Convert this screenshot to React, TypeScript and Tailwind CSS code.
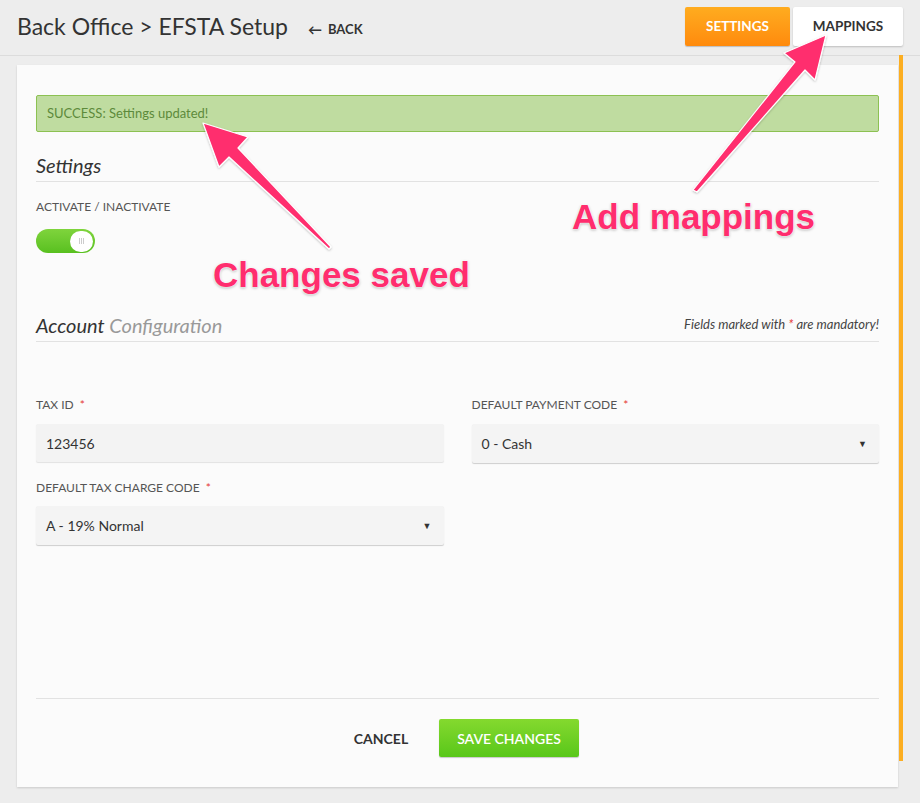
import React from "react";

function Field({ label, children }: { label: string; children: React.ReactNode }) {
  return (
    <div>
      <div className="text-[12px] leading-[16px] text-[#555] uppercase">
        {label} <span className="ml-[3px] text-[#e53935]">*</span>
      </div>
      {children}
    </div>
  );
}

function SelectBox({ value, className = "" }: { value: string; className?: string }) {
  return (
    <div
      className={`mt-[10px] flex h-[39px] items-center justify-between rounded-[2px] bg-[#f4f4f4] pl-[10px] pr-[12px] text-[14px] text-[#333] shadow-[0_1px_1px_rgba(0,0,0,0.18)] ${className}`}
    >
      <span>{value}</span>
      <span className="text-[9px] text-[#333]">▼</span>
    </div>
  );
}

export default function App() {
  return (
    <div className="relative h-[803px] w-[920px] overflow-hidden bg-[#ededed] font-['Lato',sans-serif] text-[#333]">
      <header className="flex h-[56px] items-start border-b border-[#dcdcdc] pl-[17px] pr-[17px]">
        <h1 className="mt-[10px] text-[23px] leading-[32px] text-[#333]">Back Office &gt; EFSTA Setup</h1>
        <button className="ml-[20px] mt-[19px] flex items-center gap-[6px] text-[13px] font-bold text-[#333]">
          <span className="text-[14px]">←</span> BACK
        </button>
        <div className="ml-auto mt-[7px] flex gap-[3px]">
          <button className="h-[39px] w-[105px] rounded-[2px] bg-gradient-to-b from-[#ffac1f] to-[#ff8a0c] text-[13.5px] font-bold text-white shadow-[0_1px_1px_rgba(0,0,0,0.2)]">
            SETTINGS
          </button>
          <button className="h-[39px] w-[110px] rounded-[2px] bg-white text-[13.5px] font-bold text-[#333] shadow-[0_1px_2px_rgba(0,0,0,0.2)]">
            MAPPINGS
          </button>
        </div>
      </header>

      <div className="flex">
        <main className="ml-[17px] mt-[9px] flex h-[722px] w-[881px] flex-col bg-[#fbfbfb] px-[19px] shadow-[0_1px_2px_rgba(0,0,0,0.15)]">
          <div className="mt-[30px] flex h-[37px] items-center rounded-[2px] border border-[#8cc152] bg-[#bfdca0] pl-[10px] text-[13px] text-[#5d8a3b]">
            SUCCESS: Settings updated!
          </div>

          <h2 className="mt-[21px] border-b border-[#e2e2e2] pb-[4px] text-[20px] italic leading-[24px] text-[#333]">
            Settings
          </h2>
          <div className="mt-[17px] text-[12px] leading-[16px] text-[#555]">ACTIVATE / INACTIVATE</div>
          <div className="mt-[14px] flex h-[24px] w-[59px] items-center justify-end rounded-full bg-gradient-to-b from-[#7fd43c] to-[#58c01f] pr-[2px]">
            <div className="flex h-[21px] w-[23px] items-center justify-center gap-[1px] rounded-full bg-white">
              <span className="h-[6px] w-px bg-[#ccc]" />
              <span className="h-[6px] w-px bg-[#ccc]" />
              <span className="h-[6px] w-px bg-[#ccc]" />
            </div>
          </div>

          <div className="mt-[60px] flex items-end justify-between border-b border-[#e2e2e2] pb-[4px]">
            <h2 className="text-[20px] italic leading-[24px]">
              <span className="text-[#333]">Account</span> <span className="text-[#999]">Configuration</span>
            </h2>
            <span className="mb-[3px] text-[13px] italic text-[#444]">
              Fields marked with <span className="text-[#e53935]">*</span> are mandatory!
            </span>
          </div>

          <div className="mt-[55px] grid grid-cols-2 gap-x-[28px] gap-y-[17px]">
            <Field label="Tax ID">
              <div className="mt-[11px] flex h-[38px] items-center rounded-[2px] bg-[#f3f3f3] pl-[10px] text-[14px] text-[#333] shadow-[0_1px_1px_rgba(0,0,0,0.1)]">
                123456
              </div>
            </Field>
            <Field label="Default Payment Code">
              <SelectBox value="0 - Cash" className="mt-[11px]" />
            </Field>
            <Field label="Default Tax Charge Code">
              <SelectBox value="A - 19% Normal" />
            </Field>
          </div>

          <div className="flex-1" />
          <footer className="flex justify-center gap-[13px] border-t border-[#e2e2e2] pb-[30px] pt-[20px]">
            <button className="h-[38px] w-[90px] text-[14px] font-bold text-[#333]">CANCEL</button>
            <button className="h-[38px] w-[140px] rounded-[2px] bg-gradient-to-b from-[#84d92e] to-[#58c719] text-[14px] font-semibold text-white shadow-[0_1px_1px_rgba(0,0,0,0.2)]">
              SAVE CHANGES
            </button>
          </footer>
        </main>
        <div className="ml-[1px] mt-[-1px] h-[706px] w-[4px] bg-[#fcae21]" />
      </div>

      <svg className="pointer-events-none absolute inset-0" width="920" height="803" viewBox="0 0 920 803">
        <defs>
          <filter id="sh" x="-20%" y="-20%" width="140%" height="140%">
            <feDropShadow dx="0" dy="1" stdDeviation="1" floodColor="#000" floodOpacity="0.25" />
          </filter>
        </defs>
        <g fill="#ff2d6e" stroke="#fff" strokeWidth="1.2" strokeLinejoin="round" filter="url(#sh)">
          <polygon points="203,123 248,137 238,148 331,247 329,249 229,157 219,167" />
          <polygon points="826,35 815,80 805,70 697,192 693,190 795,62 784,53" />
        </g>
      </svg>

      <div className="pointer-events-none absolute left-[213px] top-[254px] font-['Liberation_Sans',sans-serif] text-[35px] font-bold leading-[42px] text-[#ff2d6e] [text-shadow:0_0_2px_#fff,0_0_2px_#fff,0_1px_3px_rgba(0,0,0,0.35)]">
        Changes saved
      </div>
      <div className="pointer-events-none absolute left-[572px] top-[196px] font-['Liberation_Sans',sans-serif] text-[35px] font-bold leading-[42px] text-[#ff2d6e] [text-shadow:0_0_2px_#fff,0_0_2px_#fff,0_1px_3px_rgba(0,0,0,0.35)]">
        Add mappings
      </div>
    </div>
  );
}
